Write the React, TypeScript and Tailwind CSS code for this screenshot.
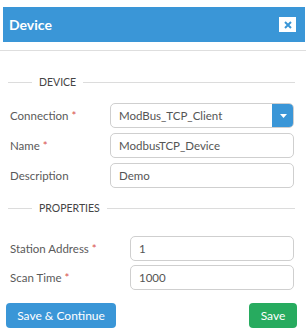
import { useState } from "react";

const font = { fontFamily: "Lato, 'Noto Sans', sans-serif" };

function Legend({ title }: { title: string }) {
  return (
    <div className="flex items-center h-[11px] pl-2 pr-[11px]">
      <div className="w-6 h-px bg-[#dcdcdc]" />
      <span className="px-[7px] text-[10.5px] text-[#444] leading-none">{title}</span>
      <div className="flex-1 h-px bg-[#dcdcdc]" />
    </div>
  );
}

function Field({
  label,
  required,
  value,
  labelWidth,
}: {
  label: string;
  required?: boolean;
  value: string;
  labelWidth: string;
}) {
  const [val, setVal] = useState(value);
  return (
    <div className="flex items-center h-[25px] pl-[10px] pr-3">
      <label className={`${labelWidth} shrink-0 text-[11.5px] leading-none text-[#5a5a5a]`}>
        {label}
        {required && <span className="text-[#d9534f] ml-[3px]">*</span>}
      </label>
      <input
        value={val}
        onChange={(e) => setVal(e.target.value)}
        className="flex-1 min-w-0 h-[25px] px-[8px] border border-[#cfcfcf] rounded-[5px] text-[11.5px] text-[#555] outline-none bg-white"
      />
    </div>
  );
}

export default function App() {
  return (
    <div className="w-[306px] h-[334px] bg-white overflow-hidden" style={font}>
      <div className="pt-[7px]">
        <div className="ml-[3px] mr-[1px] h-[35px] bg-[#3a96d7] flex items-center justify-between pl-[6px] pr-[9px]">
          <span className="text-white font-bold text-[14px] leading-none">Device</span>
          <button className="w-[17px] h-[15px] bg-white flex items-center justify-center">
            <svg width="8" height="8" viewBox="0 0 8 8">
              <path d="M1 1 L7 7 M7 1 L1 7" stroke="#3a96d7" strokeWidth="2" />
            </svg>
          </button>
        </div>
      </div>
      <div className="mt-[8px] h-px bg-[#dedede]" />

      <div className="mt-[26px]">
        <Legend title="DEVICE" />
      </div>

      <div className="mt-[15px] flex items-center h-[25px] pl-[10px] pr-3">
        <label className="w-[100px] shrink-0 text-[11.5px] leading-none text-[#5a5a5a]">
          Connection<span className="text-[#d9534f] ml-[3px]">*</span>
        </label>
        <div className="flex-1 flex h-[25px] border border-[#cfcfcf] rounded-[5px] overflow-hidden">
          <div className="flex-1 flex items-center px-[8px] text-[11.5px] text-[#555]">
            ModBus_TCP_Client
          </div>
          <div className="w-[22px] -my-px -mr-px bg-[#3a96d7] flex items-center justify-center">
            <svg width="7" height="4" viewBox="0 0 7 4">
              <path d="M0 0 L7 0 L3.5 4 Z" fill="white" />
            </svg>
          </div>
        </div>
      </div>

      <div className="mt-[5px] flex flex-col gap-[5px]">
        <Field label="Name" required value="ModbusTCP_Device" labelWidth="w-[100px]" />
        <Field label="Description" value="Demo" labelWidth="w-[100px]" />
      </div>

      <div className="mt-[15px]">
        <Legend title="PROPERTIES" />
      </div>

      <div className="mt-[22px] flex flex-col gap-[4px]">
        <Field label="Station Address" required value="1" labelWidth="w-[120px]" />
        <Field label="Scan Time" required value="1000" labelWidth="w-[120px]" />
      </div>

      <div className="mt-[13px] flex justify-between pl-[6px] pr-[9px]">
        <button className="h-[25px] w-[110px] bg-[#3a96d7] text-white text-[12px] leading-none rounded-[4px]">
          Save &amp; Continue
        </button>
        <button className="h-[25px] w-[48px] bg-[#27ab5f] text-white text-[12px] leading-none rounded-[4px]">
          Save
        </button>
      </div>
    </div>
  );
}
